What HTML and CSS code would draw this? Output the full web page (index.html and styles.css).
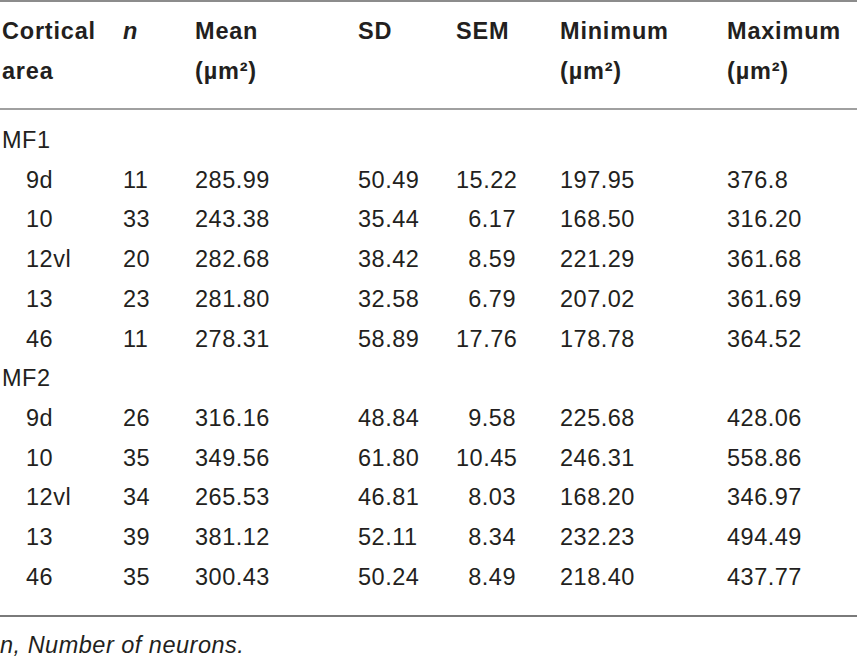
FILE: index.html
```html
<!DOCTYPE html>
<html lang="en">
<head>
    <meta charset="UTF-8">
    <meta name="viewport" content="width=device-width, initial-scale=1.0">
    <title>Neuron soma area</title>
    <link rel="stylesheet" href="styles.css">
</head>
<body>

    <table class="dados">
        <colgroup>
            <col class="c-area">
            <col class="c-n">
            <col class="c-mean">
            <col class="c-sd">
            <col class="c-sem">
            <col class="c-min">
            <col class="c-max">
        </colgroup>
        <thead>
            <tr>
                <th>Cortical<br>area</th>
                <th><em>n</em></th>
                <th>Mean<br>(µm²)</th>
                <th>SD</th>
                <th>SEM</th>
                <th>Minimum<br>(µm²)</th>
                <th>Maximum<br>(µm²)</th>
            </tr>
        </thead>
        <tbody>
            <tr class="grupo first"><td colspan="7">MF1</td></tr>
            <tr><td>9d</td><td>11</td><td>285.99</td><td>50.49</td><td class="num">15.22</td><td>197.95</td><td>376.8</td></tr>
            <tr><td>10</td><td>33</td><td>243.38</td><td>35.44</td><td class="num">6.17</td><td>168.50</td><td>316.20</td></tr>
            <tr><td>12vl</td><td>20</td><td>282.68</td><td>38.42</td><td class="num">8.59</td><td>221.29</td><td>361.68</td></tr>
            <tr><td>13</td><td>23</td><td>281.80</td><td>32.58</td><td class="num">6.79</td><td>207.02</td><td>361.69</td></tr>
            <tr><td>46</td><td>11</td><td>278.31</td><td>58.89</td><td class="num">17.76</td><td>178.78</td><td>364.52</td></tr>
            <tr class="grupo"><td colspan="7">MF2</td></tr>
            <tr><td>9d</td><td>26</td><td>316.16</td><td>48.84</td><td class="num">9.58</td><td>225.68</td><td>428.06</td></tr>
            <tr><td>10</td><td>35</td><td>349.56</td><td>61.80</td><td class="num">10.45</td><td>246.31</td><td>558.86</td></tr>
            <tr><td>12vl</td><td>34</td><td>265.53</td><td>46.81</td><td class="num">8.03</td><td>168.20</td><td>346.97</td></tr>
            <tr><td>13</td><td>39</td><td>381.12</td><td>52.11</td><td class="num">8.34</td><td>232.23</td><td>494.49</td></tr>
            <tr class="last"><td>46</td><td>35</td><td>300.43</td><td>50.24</td><td class="num">8.49</td><td>218.40</td><td>437.77</td></tr>
        </tbody>
    </table>

    <p class="nota"><em>n</em>, Number of neurons.</p>

</body>
</html>
```

FILE: styles.css
```css
body {
    font-family: "Liberation Sans", Arial, Helvetica, sans-serif;
    margin: 0;
    background-color: #fff;
    color: #231f20;
    font-size: 23.5px;
    letter-spacing: 0.5px;
}
.dados {
    width: 857px;
    border-collapse: collapse;
    table-layout: fixed;
    border-top: 2px solid #8c8c8c;
    border-bottom: 2px solid #7a7a7a;
}
.c-area { width: 123px; }
.c-n { width: 72px; }
.c-mean { width: 163px; }
.c-sd { width: 98px; }
.c-sem { width: 104px; }
.c-min { width: 167px; }
.c-max { width: 130px; }
th, td {
    padding: 0;
    text-align: left;
    vertical-align: top;
    white-space: nowrap;
}
th {
    font-weight: bold;
    letter-spacing: 0.8px;
    line-height: 40px;
    padding-top: 9px;
    padding-bottom: 17px;
    border-bottom: 2px solid #a0a0a0;
}
td {
    line-height: 39.7px;
}
th:first-child {
    padding-left: 2px;
}
td:first-child {
    padding-left: 26px;
}
.grupo td:first-child {
    padding-left: 2px;
}
.grupo.first td {
    padding-top: 11px;
}
.last td {
    padding-bottom: 18px;
}
td.num {
    text-align: right;
    padding-right: 44px;
}
.nota {
    margin: 8px 0 0;
    line-height: 40px;
    font-style: italic;
}
```
